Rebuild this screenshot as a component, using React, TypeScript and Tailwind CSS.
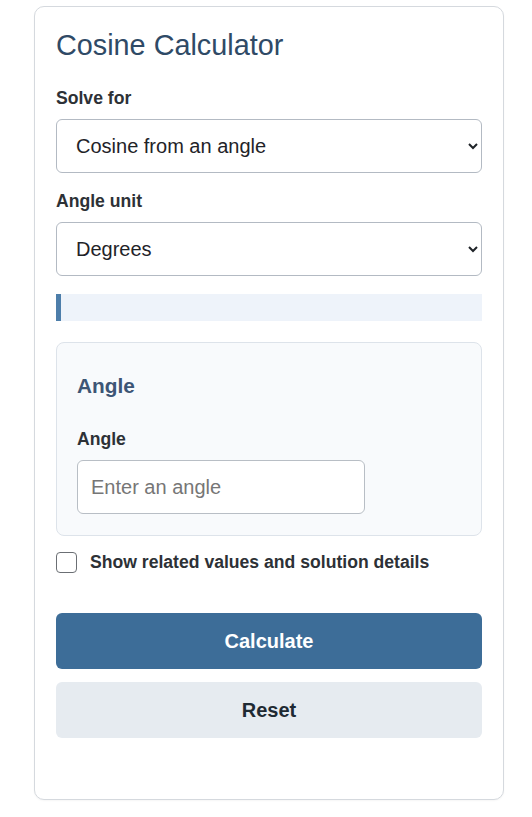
import { useState } from "react";

export default function App() {
  const [mode, setMode] = useState("angle");
  const [unit, setUnit] = useState("deg");
  const [angle, setAngle] = useState("");
  const [showDetails, setShowDetails] = useState(false);

  return (
    <div className="min-h-screen bg-white pt-[6px] pl-[34px] font-['Liberation_Sans',Arial,sans-serif]">
      <div className="w-[470px] rounded-[10px] border border-[#d5d9de] bg-white px-[21px] pt-[22px] pb-[61px] shadow-[0_1px_2px_rgba(0,0,0,0.04)]">
        <h1 className="text-[28.8px] leading-[33px] font-normal text-[#2f4a66]">
          Cosine Calculator
        </h1>

        {/* Solve for */}
        <label className="mt-[26px] block text-[17.6px] leading-[20px] font-bold text-[#2d3136]">
          Solve for
        </label>
        <select
          value={mode}
          onChange={(e) => setMode(e.target.value)}
          className="mt-[11px] block h-[54px] w-full rounded-[6px] border border-[#b3bac3] bg-white pl-[15px] pr-[8px] text-[20px] text-[#1f2328]"
        >
          <option value="angle">Cosine from an angle</option>
          <option value="inverse">Angle from a cosine</option>
        </select>

        {/* Angle unit */}
        <label className="mt-[18px] block text-[17.6px] leading-[20px] font-bold text-[#2d3136]">
          Angle unit
        </label>
        <select
          value={unit}
          onChange={(e) => setUnit(e.target.value)}
          className="mt-[11px] block h-[54px] w-full rounded-[6px] border border-[#b3bac3] bg-white pl-[15px] pr-[8px] text-[20px] text-[#1f2328]"
        >
          <option value="deg">Degrees</option>
          <option value="rad">Radians</option>
        </select>

        {/* Hint bar */}
        <div className="mt-[18px] h-[27px] border-l-[5px] border-[#4d7eaa] bg-[#eef3fa]" />

        {/* Input group */}
        <div className="mt-[21px] rounded-[8px] border border-[#dde3ea] bg-[#f8fafc] px-5 pt-[31px] pb-[21px]">
          <h2 className="text-[20.8px] leading-[24px] font-bold text-[#3d5575]">Angle</h2>
          <label className="mt-[31px] block text-[17.6px] leading-[20px] font-bold text-[#2d3136]">
            Angle
          </label>
          <input
            type="text"
            value={angle}
            onChange={(e) => setAngle(e.target.value)}
            placeholder="Enter an angle"
            className="mt-[11px] block h-[54px] w-[288px] rounded-[6px] border border-[#b8bec5] bg-white px-[13px] text-[20px] text-[#1f2328] placeholder:text-[#767676] outline-none"
          />
        </div>

        {/* Details toggle */}
        <label className="mt-[16px] flex items-center gap-[13px]">
          <input
            type="checkbox"
            checked={showDetails}
            onChange={(e) => setShowDetails(e.target.checked)}
            className="h-[21px] w-[21px] appearance-none rounded-[4px] border border-[#6b6f74] bg-white"
          />
          <span className="text-[17.6px] leading-[21px] font-bold text-[#2d3136]">
            Show related values and solution details
          </span>
        </label>

        {/* Actions */}
        <button
          type="button"
          className="mt-[40px] block h-[56px] w-full rounded-[6px] bg-[#3d6d98] text-[20px] font-bold text-white"
        >
          Calculate
        </button>
        <button
          type="button"
          onClick={() => setAngle("")}
          className="mt-[13px] block h-[56px] w-full rounded-[6px] bg-[#e6ebf0] text-[20px] font-bold text-[#1f2a33]"
        >
          Reset
        </button>
      </div>
    </div>
  );
}
